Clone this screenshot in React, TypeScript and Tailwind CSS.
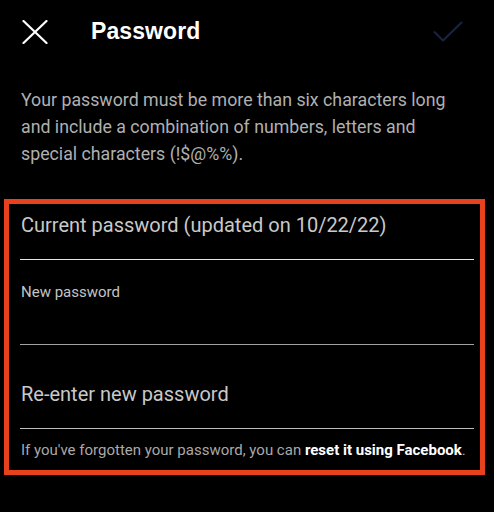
import React from 'react';

const fields = [
  { label: 'Current password (updated on 10/22/22)', small: false, pt: 'pt-[9px]', h: 'h-[56px]', line: 'border-[#e6e6e6]' },
  { label: 'New password', small: true, pt: 'pt-[23px]', h: 'h-[85px]', line: 'border-[#a3a3a3]' },
  { label: 'Re-enter new password', small: false, pt: 'pt-[37px]', h: 'h-[84px]', line: 'border-[#bdbdbd]' },
];

export default function App() {
  return (
    <div className="w-[494px] h-[512px] bg-black overflow-hidden font-['Roboto',sans-serif]">
      {/* Header */}
      <div className="h-[64px] flex items-center">
        <button className="ml-[22px] w-[26px] h-[24px] flex items-center justify-center">
          <svg width="26" height="24" viewBox="0 0 26 24" fill="none" stroke="#ffffff" strokeWidth="2.2" strokeLinecap="round">
            <path d="M1.5 1 L24.5 23" />
            <path d="M24.5 1 L1.5 23" />
          </svg>
        </button>
        <h1 className="ml-[43px] text-[23px] font-bold text-white font-['Liberation_Sans',Arial,sans-serif] tracking-[0.1px] -mt-[2px]">
          Password
        </h1>
        <div className="ml-auto mr-[31px] w-[30px] h-[22px]">
          <svg width="30" height="22" viewBox="0 0 30 22" fill="none" stroke="#1a2442" strokeWidth="2" strokeLinecap="round" strokeLinejoin="round">
            <path d="M1.5 11 L10 19.5 L28.5 1.5" />
          </svg>
        </div>
      </div>

      {/* Description */}
      <p className="mt-[23px] ml-[21px] w-[432px] text-[17.75px] leading-[27px] text-[#b0b0b0]">
        Your password must be more than six characters long and include a combination of numbers, letters and special characters (!$@%%).
      </p>

      {/* Highlighted form */}
      <div className="mt-[31px] mx-[4px] w-[481px] border-[5px] border-[#e8411d] px-[11px] pr-[6px]">
        {fields.map((f) => (
          <div key={f.label} className={`${f.h} ${f.pt} border-b ${f.line} pl-[1px]`}>
            <div className={f.small ? 'text-[15px] leading-[18px] text-[#c4c4c4]' : 'text-[20px] leading-[24px] text-[#c9c9c9]'}>
              {f.label}
            </div>
          </div>
        ))}
        <div className="pt-[12px] pb-[11px] pl-[1px] text-[15px] leading-[18px] text-[#a9a9a9] whitespace-nowrap">
          If you've forgotten your password, you can{' '}
          <span className="font-bold text-white">reset it using Facebook</span>.
        </div>
      </div>
    </div>
  );
}
